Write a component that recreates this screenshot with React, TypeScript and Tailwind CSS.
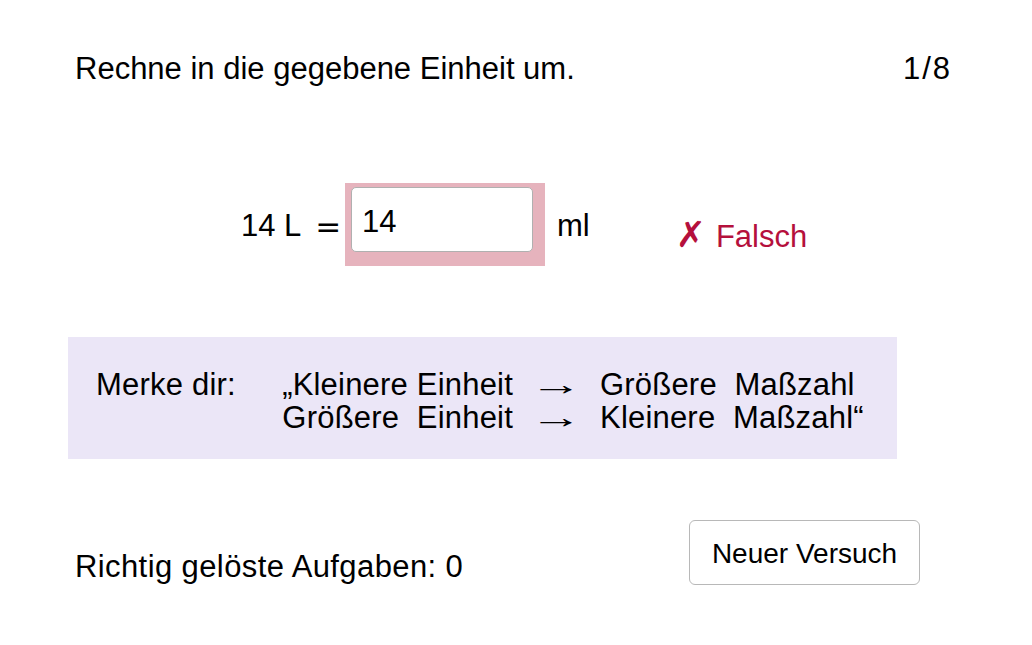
export default function App() {
  return (
    <div
      className="w-[1032px] h-[645px] bg-white text-black overflow-hidden text-[31px] leading-[36px]"
      style={{ fontFamily: '"Liberation Sans", Arial, sans-serif' }}
    >
      {/* Kopfzeile */}
      <div className="flex justify-between pl-[75px] pr-[80px] pt-[51px]">
        <span>Rechne in die gegebene Einheit um.</span>
        <span className="tracking-[2px]">1/8</span>
      </div>

      {/* Aufgabe */}
      <div className="flex items-start mt-[96px] h-[83px]">
        <span className="ml-[241px] pt-[25px] w-[104px] flex">
          <span>14 L</span>
          <span className="ml-[14px]" style={{ fontFamily: '"DejaVu Sans", sans-serif' }}>=</span>
        </span>
        <div className="w-[200px] h-[83px] bg-[#e6b3bd] pl-[6px] pt-[4px]">
          <div className="w-[182px] h-[65px] bg-white border border-[#b0b0b0] rounded-[5px] pl-[10px] pt-[16px]">
            14
          </div>
        </div>
        <span className="ml-[12px] pt-[25px]">ml</span>
        <span className="ml-[86px] pt-[34px] text-[#b5103c] flex items-baseline">
          <span className="font-bold text-[36px]" style={{ fontFamily: '"DejaVu Sans", sans-serif' }}>✗</span>
          <span className="ml-[10px]">Falsch</span>
        </span>
      </div>

      {/* Merksatz */}
      <div className="ml-[68px] mt-[71px] w-[829px] h-[122px] bg-[#ebe6f7] leading-[33px] pt-[31px] tracking-[0.2px]">
        <div className="flex">
          <span className="ml-[28px] w-[150px]">Merke dir:</span>
          <span className="w-[267px] text-right">„Kleinere Einheit</span>
          <span className="w-[87px] flex justify-center">
            <span className="inline-block scale-x-[1.7]">→</span>
          </span>
          <span>Größere&nbsp;&nbsp;Maßzahl</span>
        </div>
        <div className="flex">
          <span className="ml-[28px] w-[150px]"></span>
          <span className="w-[267px] text-right">Größere&nbsp;&nbsp;Einheit</span>
          <span className="w-[87px] flex justify-center">
            <span className="inline-block scale-x-[1.7]">→</span>
          </span>
          <span>Kleinere&nbsp;&nbsp;Maßzahl“</span>
        </div>
      </div>

      {/* Fußzeile */}
      <div className="flex justify-between items-start pl-[75px] pr-[112px] mt-[61px]">
        <span className="pt-[29px] tracking-[0.4px]">Richtig gelöste Aufgaben: 0</span>
        <button className="w-[231px] h-[65px] border border-[#b8b8b8] rounded-[6px] bg-white text-[28px] pt-[2px]">
          Neuer Versuch
        </button>
      </div>
    </div>
  );
}
